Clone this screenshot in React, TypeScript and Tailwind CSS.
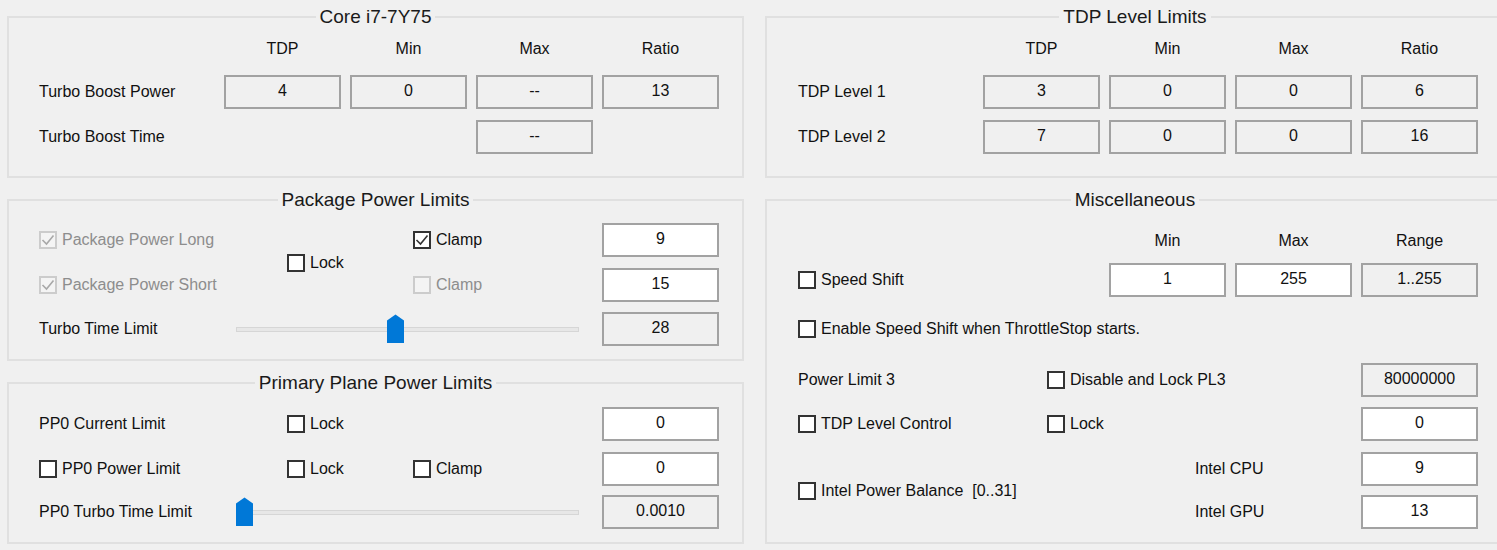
import React from 'react';

const COLS = 'grid grid-cols-[176px_117px_117px_117px_117px] gap-x-[9px] items-center';

function Field({ value, ro = false }: { value: string; ro?: boolean }) {
  return (
    <div
      className={`flex h-[34px] w-[117px] items-center justify-center border-2 border-[#a2a2a2] pb-[3px] ${
        ro ? 'bg-[#f0f0f0]' : 'bg-white'
      }`}
    >
      {value}
    </div>
  );
}

function Check({ label, checked = false, disabled = false }: { label?: string; checked?: boolean; disabled?: boolean }) {
  return (
    <div className="flex items-center">
      <span
        className={`flex h-[18px] w-[18px] shrink-0 items-center justify-center border-2 ${
          disabled ? 'border-[#cccccc] bg-[#f4f4f4]' : 'border-[#333333] bg-white'
        }`}
      >
        {checked && (
          <svg viewBox="0 0 14 14" className="h-[14px] w-[14px]">
            <polyline
              points="1.5,7 5.5,11 12.5,2.5"
              fill="none"
              stroke={disabled ? '#a8a8a8' : '#333333'}
              strokeWidth="1.6"
            />
          </svg>
        )}
      </span>
      {label && <span className={`ml-[5px] whitespace-pre ${disabled ? 'text-[#8d8d8d]' : ''}`}>{label}</span>}
    </div>
  );
}

function Slider({ offset }: { offset: number }) {
  return (
    <div className="relative col-span-3 flex h-[34px] items-center pl-[12px] pr-[14px]">
      <div className="h-[5px] w-full border border-[#d6d6d6] bg-[#e7e7e7]" />
      <svg className="absolute top-[2px]" style={{ left: offset }} width="17" height="29" viewBox="0 0 17 29">
        <path d="M0 6.5 L8.5 0.5 L17 6.5 V29 H0 Z" fill="#0078d7" />
      </svg>
    </div>
  );
}

function Group({ title, inner, children }: { title: string; inner: string; children: React.ReactNode }) {
  return (
    <fieldset className="border-2 border-[#e0e0e0]">
      <legend className="mx-auto px-[4px] text-[19px] leading-[20px] text-[#1a1a1a]">{title}</legend>
      <div className={inner}>{children}</div>
    </fieldset>
  );
}

function Header({ labels, start }: { labels: string[]; start: number }) {
  return (
    <div className={`${COLS} h-[24px]`}>
      {start === 2 && <div />}
      {start === 3 && (
        <>
          <div />
          <div />
        </>
      )}
      {labels.map((l) => (
        <div key={l} className="text-center">
          {l}
        </div>
      ))}
    </div>
  );
}

export default function App() {
  return (
    <div className="h-[550px] w-[1497px] overflow-hidden bg-[#f0f0f0] font-['Liberation_Sans',Arial,sans-serif] text-[16px] leading-[20px] text-[#111111]">
      <div className="flex gap-[21px] pl-[7px] pt-[7px]">
        {/* left column */}
        <div className="flex w-[737px] shrink-0 flex-col gap-[12px]">
          <Group title="Core i7-7Y75" inner="pb-[22px] pl-[30px]">
            <div className="mt-[10px]">
              <Header labels={['TDP', 'Min', 'Max', 'Ratio']} start={2} />
            </div>
            <div className={`${COLS} mt-[14px]`}>
              <div>Turbo Boost Power</div>
              <Field value="4" ro />
              <Field value="0" ro />
              <Field value="--" ro />
              <Field value="13" ro />
            </div>
            <div className={`${COLS} mt-[11px]`}>
              <div>Turbo Boost Time</div>
              <div />
              <div />
              <Field value="--" ro />
            </div>
          </Group>

          <Group title="Package Power Limits" inner="pb-[13px] pl-[30px]">
            <div className={`${COLS} mt-[13px] grid-rows-[34px_34px] gap-y-[11px]`}>
              <div className="col-start-1 row-start-1">
                <Check label="Package Power Long" checked disabled />
              </div>
              <div className="col-start-2 row-span-2 row-start-1 pl-[63px]">
                <Check label="Lock" />
              </div>
              <div className="col-start-3 row-start-1 pl-[63px]">
                <Check label="Clamp" checked />
              </div>
              <div className="col-start-5 row-start-1">
                <Field value="9" />
              </div>
              <div className="col-start-1 row-start-2">
                <Check label="Package Power Short" checked disabled />
              </div>
              <div className="col-start-3 row-start-2 pl-[63px]">
                <Check label="Clamp" disabled />
              </div>
              <div className="col-start-5 row-start-2">
                <Field value="15" />
              </div>
            </div>
            <div className={`${COLS} mt-[10px]`}>
              <div>Turbo Time Limit</div>
              <Slider offset={163} />
              <Field value="28" ro />
            </div>
          </Group>

          <Group title="Primary Plane Power Limits" inner="pb-[13px] pl-[30px]">
            <div className={`${COLS} mt-[14px]`}>
              <div>PP0 Current Limit</div>
              <div className="pl-[63px]">
                <Check label="Lock" />
              </div>
              <div />
              <div />
              <Field value="0" />
            </div>
            <div className={`${COLS} mt-[11px]`}>
              <Check label="PP0 Power Limit" />
              <div className="pl-[63px]">
                <Check label="Lock" />
              </div>
              <div className="pl-[63px]">
                <Check label="Clamp" />
              </div>
              <div />
              <Field value="0" />
            </div>
            <div className={`${COLS} mt-[9px]`}>
              <div>PP0 Turbo Time Limit</div>
              <Slider offset={12} />
              <Field value="0.0010" ro />
            </div>
          </Group>
        </div>

        {/* right column */}
        <div className="flex w-[740px] shrink-0 flex-col gap-[12px]">
          <Group title="TDP Level Limits" inner="pb-[22px] pl-[31px]">
            <div className="mt-[10px]">
              <Header labels={['TDP', 'Min', 'Max', 'Ratio']} start={2} />
            </div>
            <div className={`${COLS} mt-[14px]`}>
              <div>TDP Level 1</div>
              <Field value="3" ro />
              <Field value="0" ro />
              <Field value="0" ro />
              <Field value="6" ro />
            </div>
            <div className={`${COLS} mt-[11px]`}>
              <div>TDP Level 2</div>
              <Field value="7" ro />
              <Field value="0" ro />
              <Field value="0" ro />
              <Field value="16" ro />
            </div>
          </Group>

          <Group title="Miscellaneous" inner="pb-[13px] pl-[31px]">
            <div className="mt-[19px]">
              <Header labels={['Min', 'Max', 'Range']} start={3} />
            </div>
            <div className={`${COLS} mt-[10px]`}>
              <div className="col-span-2">
                <Check label="Speed Shift" />
              </div>
              <Field value="1" />
              <Field value="255" />
              <Field value="1..255" ro />
            </div>
            <div className="mt-[15px] flex h-[34px] items-center">
              <Check label="Enable Speed Shift when ThrottleStop starts." />
            </div>
            <div className={`${COLS} mt-[17px]`}>
              <div>Power Limit 3</div>
              <div className="col-span-3 pl-[64px]">
                <Check label="Disable and Lock PL3" />
              </div>
              <Field value="80000000" ro />
            </div>
            <div className={`${COLS} mt-[10px]`}>
              <Check label="TDP Level Control" />
              <div className="col-span-3 pl-[64px]">
                <Check label="Lock" />
              </div>
              <Field value="0" />
            </div>
            <div className={`${COLS} mt-[11px] grid-rows-[34px_34px] gap-y-[9px]`}>
              <div className="col-span-2 col-start-1 row-span-2 row-start-1">
                <Check label="Intel Power Balance  [0..31]" />
              </div>
              <div className="col-span-2 col-start-3 row-start-1 pl-[86px]">Intel CPU</div>
              <div className="col-start-5 row-start-1">
                <Field value="9" />
              </div>
              <div className="col-span-2 col-start-3 row-start-2 pl-[86px]">Intel GPU</div>
              <div className="col-start-5 row-start-2">
                <Field value="13" />
              </div>
            </div>
          </Group>
        </div>
      </div>
    </div>
  );
}
